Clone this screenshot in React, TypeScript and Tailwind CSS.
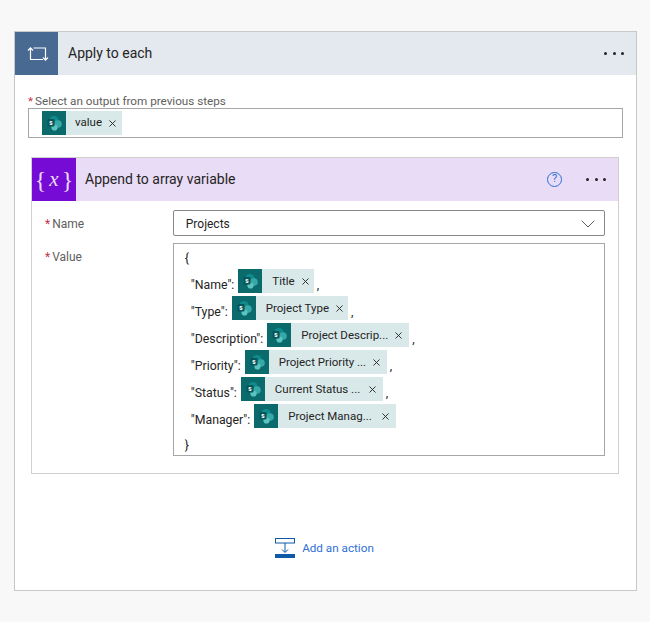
import { X, ChevronDown } from "lucide-react";

function SpIcon() {
  return (
    <span className="flex h-6 w-6 shrink-0 items-center justify-center bg-[#0b6a6c]">
      <svg width="18" height="18" viewBox="0 0 18 18">
        <circle cx="9" cy="6.5" r="4.6" fill="#0f8a8d" />
        <circle cx="13" cy="10" r="3.8" fill="#35a8a8" />
        <circle cx="9.5" cy="13.5" r="3.1" fill="#5cc4c0" />
        <rect x="2.5" y="5" width="7" height="7.5" rx="1" fill="#07565a" />
        <text x="6" y="11" textAnchor="middle" fontSize="6.5" fontWeight="700" fill="#ffffff" fontFamily="Roboto, sans-serif">s</text>
      </svg>
    </span>
  );
}

function Chip({ label, wide }: { label: string; wide?: boolean }) {
  return (
    <span className={`inline-flex h-6 items-center whitespace-nowrap bg-[#d9e9ea] text-[11.5px] text-[#252423] ${wide ? "w-[142px]" : ""}`}>
      <SpIcon />
      <span className={`flex flex-1 items-center justify-between gap-[5px] pl-[10px] ${wide ? "pr-[5px]" : "pr-[3px]"}`}>
        <span className="pt-[2px]">{label}</span>
        <X size={11} strokeWidth={2} className="shrink-0 text-[#252423]" />
      </span>
    </span>
  );
}

function Dots() {
  return (
    <span className="flex items-center gap-[5.5px]">
      <span className="h-[3px] w-[3px] rounded-full bg-[#252423]" />
      <span className="h-[3px] w-[3px] rounded-full bg-[#252423]" />
      <span className="h-[3px] w-[3px] rounded-full bg-[#252423]" />
    </span>
  );
}

const rows = [
  { key: "Name", label: "Title", comma: true, wide: false },
  { key: "Type", label: "Project Type", comma: true, wide: false },
  { key: "Description", label: "Project Descrip...", comma: true, wide: true },
  { key: "Priority", label: "Project Priority ...", comma: true, wide: true },
  { key: "Status", label: "Current Status ...", comma: true, wide: true },
  { key: "Manager", label: "Project Manag...", comma: false, wide: true },
];

export default function App() {
  return (
    <div className="h-[622px] w-[650px] bg-[#f8f8f8] px-[14px] pt-[31px] font-['Roboto',sans-serif] text-[#252423]">
      <div className="h-[560px] w-[623px] border border-[#c8c8c8] bg-white">
        <div className="flex h-[43px] items-center bg-[#e4e8ef] pr-[12px]">
          <div className="flex h-[43px] w-[43px] items-center justify-center bg-[#486991] pl-[2px]">
            <svg width="22" height="16" viewBox="0 0 22 16" fill="none" stroke="#ffffff" strokeWidth="1.2">
              <path d="M3.5 2V13.5H16" />
              <path d="M1 4.5 3.5 1.8 6 4.5" />
              <path d="M6.5 2H18.5V14" />
              <path d="M16 11.5 18.5 14.2 21 11.5" />
            </svg>
          </div>
          <span className="ml-[10px] flex-1 text-[14px]">Apply to each</span>
          <Dots />
        </div>

        <div className="px-[13px] pt-[20px]">
          <div className="h-[13px] text-[11.7px] leading-[13px] text-[#605e5c]">
            <span className="mr-[2px] text-[#c4314b]">*</span>Select an output from previous steps
          </div>
          <div className="flex h-[30px] items-center border border-[#a6a6a6] pl-[13px]">
            <span className="inline-flex h-6 items-center bg-[#d9e9ea] text-[11.5px]">
              <SpIcon />
              <span className="flex items-center gap-[5px] pl-[9px] pr-[4px]">
                value
                <X size={11} strokeWidth={2} />
              </span>
            </span>
          </div>
        </div>

        <div className="ml-[16px] mt-[19px] h-[317px] w-[588px] border border-[#d2d0ce]">
          <div className="flex h-[43px] items-center bg-[#e9dcf7] pr-[12px]">
            <div className="flex h-[43px] w-[44px] items-center justify-center gap-[3px] bg-[#770bd6] font-['Liberation_Serif',serif] text-[24px] text-[#e9dcf7]">
              <span>{"{"}</span>
              <span className="text-[21px] italic">x</span>
              <span>{"}"}</span>
            </div>
            <span className="ml-[9px] flex-1 text-[14px]">Append to array variable</span>
            <span className="mr-[24px] flex h-[15px] w-[15px] items-center justify-center rounded-full border border-[#2f6fd6] text-[11px] text-[#2f6fd6]">?</span>
            <Dots />
          </div>

          <div className="px-[13px] pt-[9px]">
            <div className="flex">
              <div className="w-[128px] pt-[5px] text-[12px] text-[#605e5c]">
                <span className="mr-[2px] text-[#c4314b]">*</span>Name
              </div>
              <div className="flex h-[26px] w-[433px] items-center justify-between rounded-[2px] border border-[#8a8886] pl-[12px] pr-[4px] pt-[2px] text-[12px]">
                Projects
                <ChevronDown size={24} strokeWidth={1} className="text-[#605e5c]" />
              </div>
            </div>

            <div className="mt-[7px] flex">
              <div className="w-[128px] pt-[5px] text-[12px] text-[#605e5c]">
                <span className="mr-[2px] text-[#c4314b]">*</span>Value
              </div>
              <div className="h-[213px] w-[433px] border border-[#a6a6a6] pl-[11px] pt-[6px] text-[12.3px]">
                <div className="h-[19px] leading-[17px]">{"{"}</div>
                <div className="flex flex-col gap-[3px] pl-[6px]">
                  {rows.map((r) => (
                    <div key={r.key} className="flex h-6 items-start whitespace-nowrap">
                      <span className="pt-[8px] leading-[17px]">"{r.key}":</span>
                      <span className="ml-[4px]">
                        <Chip label={r.label} wide={r.wide} />
                      </span>
                      {r.comma && <span className="ml-[3px] pt-[8px] leading-[17px]">,</span>}
                    </div>
                  ))}
                </div>
                <div className="mt-[9px] leading-[17px]">{"}"}</div>
              </div>
            </div>
          </div>
        </div>

        <div className="mt-[64px] flex items-center justify-center gap-[7px] pr-[2px]">
          <svg width="20" height="20" viewBox="0 0 20 20" fill="none">
            <rect x="0.5" y="0.5" width="19" height="4.5" fill="#ffffff" stroke="#0f5aa6" />
            <path d="M10 5V14M7 11.5 10 14.5 13 11.5" stroke="#0f5aa6" />
            <rect x="0" y="16" width="20" height="4" fill="#0f5aa6" />
          </svg>
          <span className="pt-[1px] text-[11.7px] text-[#2f6fd6]">Add an action</span>
        </div>
      </div>
    </div>
  );
}
